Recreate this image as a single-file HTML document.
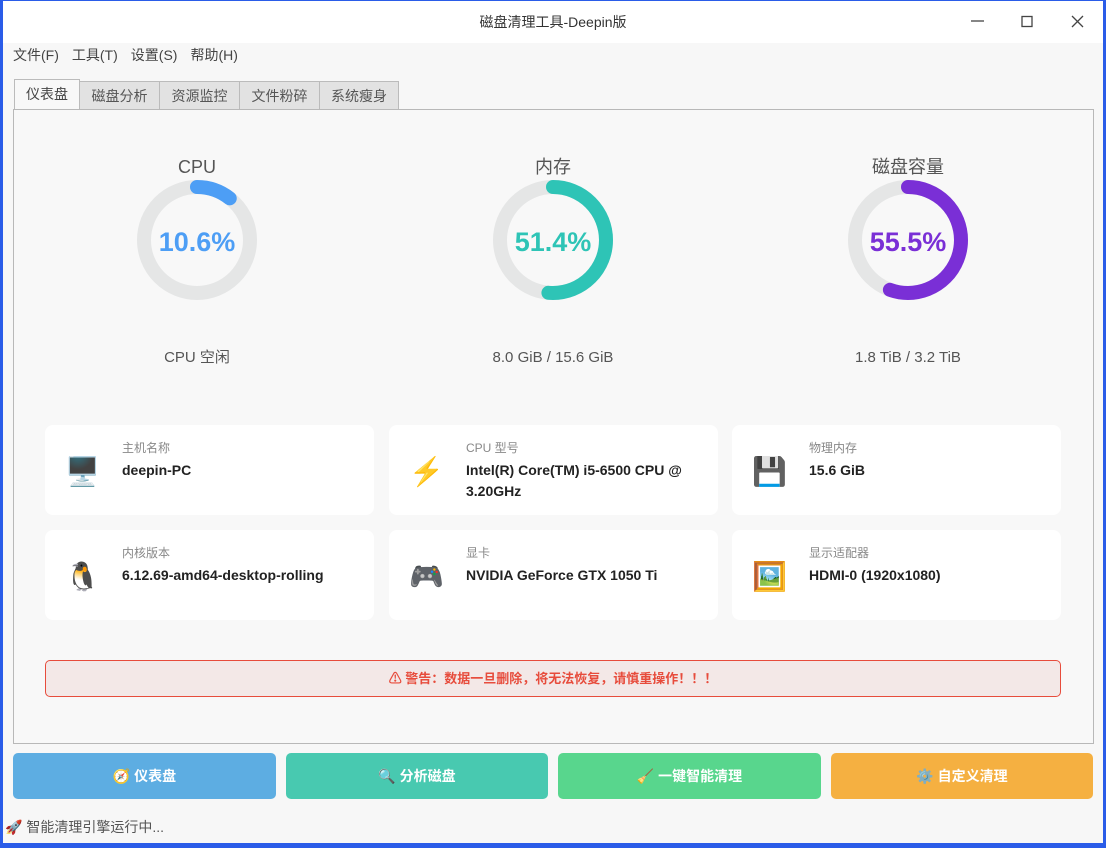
<!DOCTYPE html><html><head><meta charset="utf-8"><style>
*{box-sizing:border-box;margin:0;padding:0}
body{width:1106px;height:848px;background:#2a5ce8;font-family:"Liberation Sans","Noto Sans CJK SC",sans-serif;position:relative;overflow:hidden}
.win{position:absolute;left:3px;top:1px;width:1100px;height:842px;background:#f7f7f7}
.title{position:absolute;left:0;top:0;width:100%;height:42px;background:#fff;text-align:center;line-height:42px;font-size:14px;color:#333}
.menu{position:absolute;top:44px;left:10px;font-size:14px;color:#444}
.menu span{margin-right:13px}
.tab{position:absolute;top:80px;height:29px;border:1px solid #bbb;background:#e2e2e2;font-size:14px;color:#555;text-align:center;line-height:28px}
.pane{position:absolute;left:10px;top:108px;width:1081px;height:635px;border:1px solid #b8b8b8;background:#f8f8f8}
.g{position:absolute;text-align:center;width:200px}
.card{position:absolute;width:329px;height:90px;background:#fff;border-radius:8px}
.card .ic{position:absolute;left:20px;top:30px;font-size:28px}
.card .l{position:absolute;left:77px;top:14px;font-size:12px;color:#888}
.card .v{position:absolute;left:77px;top:35px;font-size:14px;font-weight:bold;color:#222;line-height:21px;width:240px}
.btn{position:absolute;top:753px;height:46px;border-radius:5px;color:#fff;font-size:14px;font-weight:bold;text-align:center;line-height:46px}
</style></head><body>
<div class="win">
<div class="title">磁盘清理工具-Deepin版</div>
<svg style="position:absolute;left:960px;top:12px" width="130" height="20"><line x1="8" y1="8" x2="21" y2="8" stroke="#444" stroke-width="1.3"/><rect x="59" y="3.5" width="10" height="10" fill="none" stroke="#444" stroke-width="1.3"/><path d="M109 3L120 14M120 3L109 14" stroke="#444" stroke-width="1.3"/></svg>
<div class="menu"><span>文件(F)</span><span>工具(T)</span><span>设置(S)</span><span>帮助(H)</span></div>
<div class="tab" style="left:11px;width:66px;background:#f8f8f8;border-bottom:none;height:30px;top:78px;color:#444">仪表盘</div>
<div class="tab" style="left:76px;width:81px">磁盘分析</div>
<div class="tab" style="left:156px;width:81px">资源监控</div>
<div class="tab" style="left:236px;width:81px">文件粉碎</div>
<div class="tab" style="left:316px;width:80px">系统瘦身</div>
<div class="pane"></div>
</div>
<svg style="position:absolute;left:0;top:0" width="1106" height="400">
<g font-family="Liberation Sans,Noto Sans CJK SC,sans-serif" text-anchor="middle">
<circle cx="197" cy="240" r="53" fill="none" stroke="#e5e6e6" stroke-width="14"/>
<circle cx="197" cy="240" r="53" fill="none" stroke="#4d9ef5" stroke-width="14" stroke-linecap="round" stroke-dasharray="35.3 400" transform="rotate(-90 197 240)"/>
<text x="197" y="251" font-size="27" font-weight="bold" fill="#4d9ef5">10.6%</text>
<text x="197" y="173" font-size="18" fill="#555">CPU</text>
<text x="197" y="362" font-size="15" fill="#555">CPU 空闲</text>
<circle cx="553" cy="240" r="53" fill="none" stroke="#e5e6e6" stroke-width="14"/>
<circle cx="553" cy="240" r="53" fill="none" stroke="#2ec4b6" stroke-width="14" stroke-linecap="round" stroke-dasharray="171 400" transform="rotate(-90 553 240)"/>
<text x="553" y="251" font-size="27" font-weight="bold" fill="#2ec4b6">51.4%</text>
<text x="553" y="173" font-size="18" fill="#555">内存</text>
<text x="553" y="362" font-size="15" fill="#555">8.0 GiB / 15.6 GiB</text>
<circle cx="908" cy="240" r="53" fill="none" stroke="#e5e6e6" stroke-width="14"/>
<circle cx="908" cy="240" r="53" fill="none" stroke="#7a2fd6" stroke-width="14" stroke-linecap="round" stroke-dasharray="184.8 400" transform="rotate(-90 908 240)"/>
<text x="908" y="251" font-size="27" font-weight="bold" fill="#7a2fd6">55.5%</text>
<text x="908" y="173" font-size="18" fill="#555">磁盘容量</text>
<text x="908" y="362" font-size="15" fill="#555">1.8 TiB / 3.2 TiB</text>
</g></svg>
<div class="card" style="left:45px;top:425px"><div class="ic">🖥️</div><div class="l">主机名称</div><div class="v">deepin-PC</div></div>
<div class="card" style="left:389px;top:425px"><div class="ic" style="color:#f5c33b">⚡</div><div class="l">CPU 型号</div><div class="v">Intel(R) Core(TM) i5-6500 CPU @ 3.20GHz</div></div>
<div class="card" style="left:732px;top:425px"><div class="ic">💾</div><div class="l">物理内存</div><div class="v">15.6 GiB</div></div>
<div class="card" style="left:45px;top:530px"><div class="ic">🐧</div><div class="l">内核版本</div><div class="v">6.12.69-amd64-desktop-rolling</div></div>
<div class="card" style="left:389px;top:530px"><div class="ic">🎮</div><div class="l">显卡</div><div class="v">NVIDIA GeForce GTX 1050 Ti</div></div>
<div class="card" style="left:732px;top:530px"><div class="ic">🖼️</div><div class="l">显示适配器</div><div class="v">HDMI-0 (1920x1080)</div></div>
<div style="position:absolute;left:45px;top:660px;width:1016px;height:37px;border:1px solid #e74c3c;border-radius:5px;background:#f3e8e7;color:#e74c3c;font-size:13px;font-weight:bold;text-align:center;line-height:35px">⚠ 警告：数据一旦删除，将无法恢复，请慎重操作！！！</div>
<div class="btn" style="left:13px;width:263px;background:#5dade2">🧭 仪表盘</div>
<div class="btn" style="left:286px;width:262px;background:#48c9b0">🔍 分析磁盘</div>
<div class="btn" style="left:558px;width:263px;background:#58d68d">🧹 一键智能清理</div>
<div class="btn" style="left:831px;width:262px;background:#f5b041">⚙️ 自定义清理</div>
<div style="position:absolute;left:5px;top:817px;font-size:14px;color:#555">🚀 智能清理引擎运行中...</div>
</body></html>
